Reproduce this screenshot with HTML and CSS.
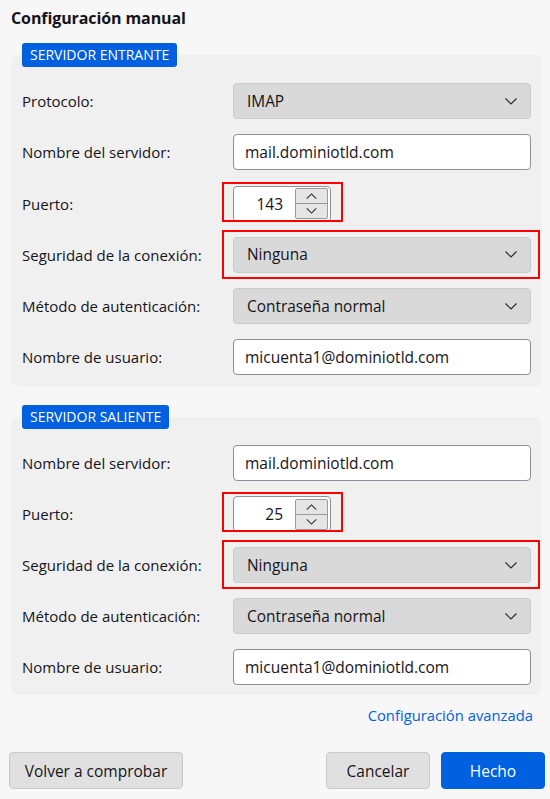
FILE: index.html
```html
<!DOCTYPE html>
<html lang="es">
<head>
<meta charset="utf-8">
<title>Configuración manual</title>
<link rel="stylesheet" href="styles.css">
</head>
<body>
<div class="page">
  <h1 class="title">Configuración manual</h1>

  <section class="section">
    <div class="legend"><span class="badge">SERVIDOR ENTRANTE</span></div>
    <div class="box">
      <label class="label">Protocolo:</label>
      <div class="select"><span>IMAP</span><svg class="chev" viewBox="0 0 12 7" width="12" height="7"><path d="M0.5 0.5 L6 6 L11.5 0.5" /></svg></div>

      <label class="label">Nombre del servidor:</label>
      <div class="input">mail.dominiotld.com</div>

      <label class="label">Puerto:</label>
      <div class="ctl">
        <div class="spin">
          <span class="num">143</span>
          <div class="spin-btns">
            <span class="sb"><svg viewBox="0 0 12 7" width="11" height="6"><path d="M0.5 6.5 L6 1 L11.5 6.5" /></svg></span>
            <span class="sb"><svg viewBox="0 0 12 7" width="11" height="6"><path d="M0.5 0.5 L6 6 L11.5 0.5" /></svg></span>
          </div>
        </div>
        <span class="mark mark-spin"></span>
      </div>

      <label class="label">Seguridad de la conexión:</label>
      <div class="ctl">
        <div class="select"><span>Ninguna</span><svg class="chev" viewBox="0 0 12 7" width="12" height="7"><path d="M0.5 0.5 L6 6 L11.5 0.5" /></svg></div>
        <span class="mark mark-sel"></span>
      </div>

      <label class="label">Método de autenticación:</label>
      <div class="select"><span>Contraseña normal</span><svg class="chev" viewBox="0 0 12 7" width="12" height="7"><path d="M0.5 0.5 L6 6 L11.5 0.5" /></svg></div>

      <label class="label">Nombre de usuario:</label>
      <div class="input">micuenta1@dominiotld.com</div>
    </div>
  </section>

  <section class="section section-2">
    <div class="legend"><span class="badge">SERVIDOR SALIENTE</span></div>
    <div class="box">
      <label class="label">Nombre del servidor:</label>
      <div class="input">mail.dominiotld.com</div>

      <label class="label">Puerto:</label>
      <div class="ctl">
        <div class="spin">
          <span class="num">25</span>
          <div class="spin-btns">
            <span class="sb"><svg viewBox="0 0 12 7" width="11" height="6"><path d="M0.5 6.5 L6 1 L11.5 6.5" /></svg></span>
            <span class="sb"><svg viewBox="0 0 12 7" width="11" height="6"><path d="M0.5 0.5 L6 6 L11.5 0.5" /></svg></span>
          </div>
        </div>
        <span class="mark mark-spin"></span>
      </div>

      <label class="label">Seguridad de la conexión:</label>
      <div class="ctl">
        <div class="select"><span>Ninguna</span><svg class="chev" viewBox="0 0 12 7" width="12" height="7"><path d="M0.5 0.5 L6 6 L11.5 0.5" /></svg></div>
        <span class="mark mark-sel"></span>
      </div>

      <label class="label">Método de autenticación:</label>
      <div class="select"><span>Contraseña normal</span><svg class="chev" viewBox="0 0 12 7" width="12" height="7"><path d="M0.5 0.5 L6 6 L11.5 0.5" /></svg></div>

      <label class="label">Nombre de usuario:</label>
      <div class="input">micuenta1@dominiotld.com</div>
    </div>
  </section>

  <div class="link-row"><a class="link" href="#">Configuración avanzada</a></div>

  <div class="footer">
    <button class="btn btn-retest">Volver a comprobar</button>
    <div class="spacer"></div>
    <button class="btn btn-cancel">Cancelar</button>
    <button class="btn btn-primary">Hecho</button>
  </div>
</div>
</body>
</html>
```

FILE: styles.css
```css
html, body {
  margin: 0;
  padding: 0;
  background: #f7f7f7;
}
body {
  font-family: "Open Sans", "Noto Sans", "Liberation Sans", sans-serif;
  color: #15141a;
  font-size: 15px;
}
.page {
  padding: 6px 8px 0 11px;
}
.title {
  margin: 0;
  font-size: 16px;
  font-weight: 700;
  line-height: 24px;
  letter-spacing: -0.1px;
}
.section {
  margin-top: 13px;
}
.section-2 {
  margin-top: 19px;
}
.legend {
  position: relative;
  z-index: 1;
  height: 24px;
  margin-bottom: -12px;
  padding-left: 11px;
}
.badge {
  display: inline-block;
  height: 24px;
  line-height: 24px;
  padding: 0 8px;
  background: #0060df;
  color: #fff;
  font-size: 14px;
  border-radius: 3px;
}
.box {
  background: #f0f0f0;
  border-radius: 6px;
  padding: 28px 11px 11px 11px;
  display: grid;
  grid-template-columns: 211px 1fr;
  row-gap: 15.3px;
  align-items: center;
}
.section-2 .box {
  padding-top: 28px;
  padding-bottom: 10px;
  row-gap: 15px;
}
.label {
  font-size: 15px;
}
.ctl {
  position: relative;
}
.select {
  height: 36px;
  box-sizing: border-box;
  border: 1px solid #cbcbcb;
  background: #d9d9d9;
  border-radius: 4px;
  display: flex;
  align-items: center;
  justify-content: space-between;
  padding: 0 13px 0 13px;
  font-size: 15.4px;
}
.chev {
  fill: none;
  stroke: #2b2a33;
  stroke-width: 1.2;
}
.input {
  height: 36px;
  box-sizing: border-box;
  border: 1px solid #8f8f9d;
  background: #fff;
  border-radius: 4px;
  display: flex;
  align-items: center;
  padding: 0 11px;
  font-size: 15.5px;
}
.spin {
  width: 98px;
  height: 36px;
  box-sizing: border-box;
  border: 1px solid #8f8f9d;
  background: #fff;
  border-radius: 4px;
  display: flex;
  align-items: center;
  justify-content: flex-end;
  padding: 2px 2px 2px 0;
}
.num {
  font-size: 15.5px;
  margin-right: 12px;
}
.spin-btns {
  display: flex;
  flex-direction: column;
  width: 33px;
  height: 31px;
  box-sizing: border-box;
  border: 1px solid #9a9a9a;
  border-radius: 2px;
  background: #e5e5e5;
  overflow: hidden;
}
.sb {
  flex: 1;
  display: flex;
  align-items: center;
  justify-content: center;
}
.sb + .sb {
  border-top: 1px solid #9a9a9a;
}
.sb svg {
  fill: none;
  stroke: #2b2a33;
  stroke-width: 1.2;
}
.mark {
  position: absolute;
  border: 2px solid #ff0000;
  pointer-events: none;
}
.mark-spin {
  left: -11px;
  top: -4px;
  width: 121px;
  height: 40px;
  box-sizing: border-box;
}
.mark-sel {
  left: -11px;
  right: -9px;
  top: -7px;
  bottom: -6px;
}
.link-row {
  display: flex;
  justify-content: flex-end;
  padding-right: 9px;
  margin-top: 9px;
}
.link {
  color: #0060df;
  text-decoration: none;
  font-size: 14.8px;
  line-height: 22px;
}
.footer {
  display: flex;
  align-items: center;
  margin: 26px -3px 0 -2px;
  gap: 11px;
}
.spacer {
  flex: 1;
}
.btn {
  font-family: inherit;
  font-size: 15.5px;
  height: 37px;
  box-sizing: border-box;
  border: 1px solid #c9c9c9;
  background: #e0e0e0;
  color: #15141a;
  border-radius: 4px;
  padding: 0 10px;
}
.btn-retest {
  width: 174px;
}
.btn-cancel {
  width: 104px;
}
.btn-primary {
  width: 104px;
  background: #0061e0;
  border-color: #0061e0;
  color: #fff;
}
```
